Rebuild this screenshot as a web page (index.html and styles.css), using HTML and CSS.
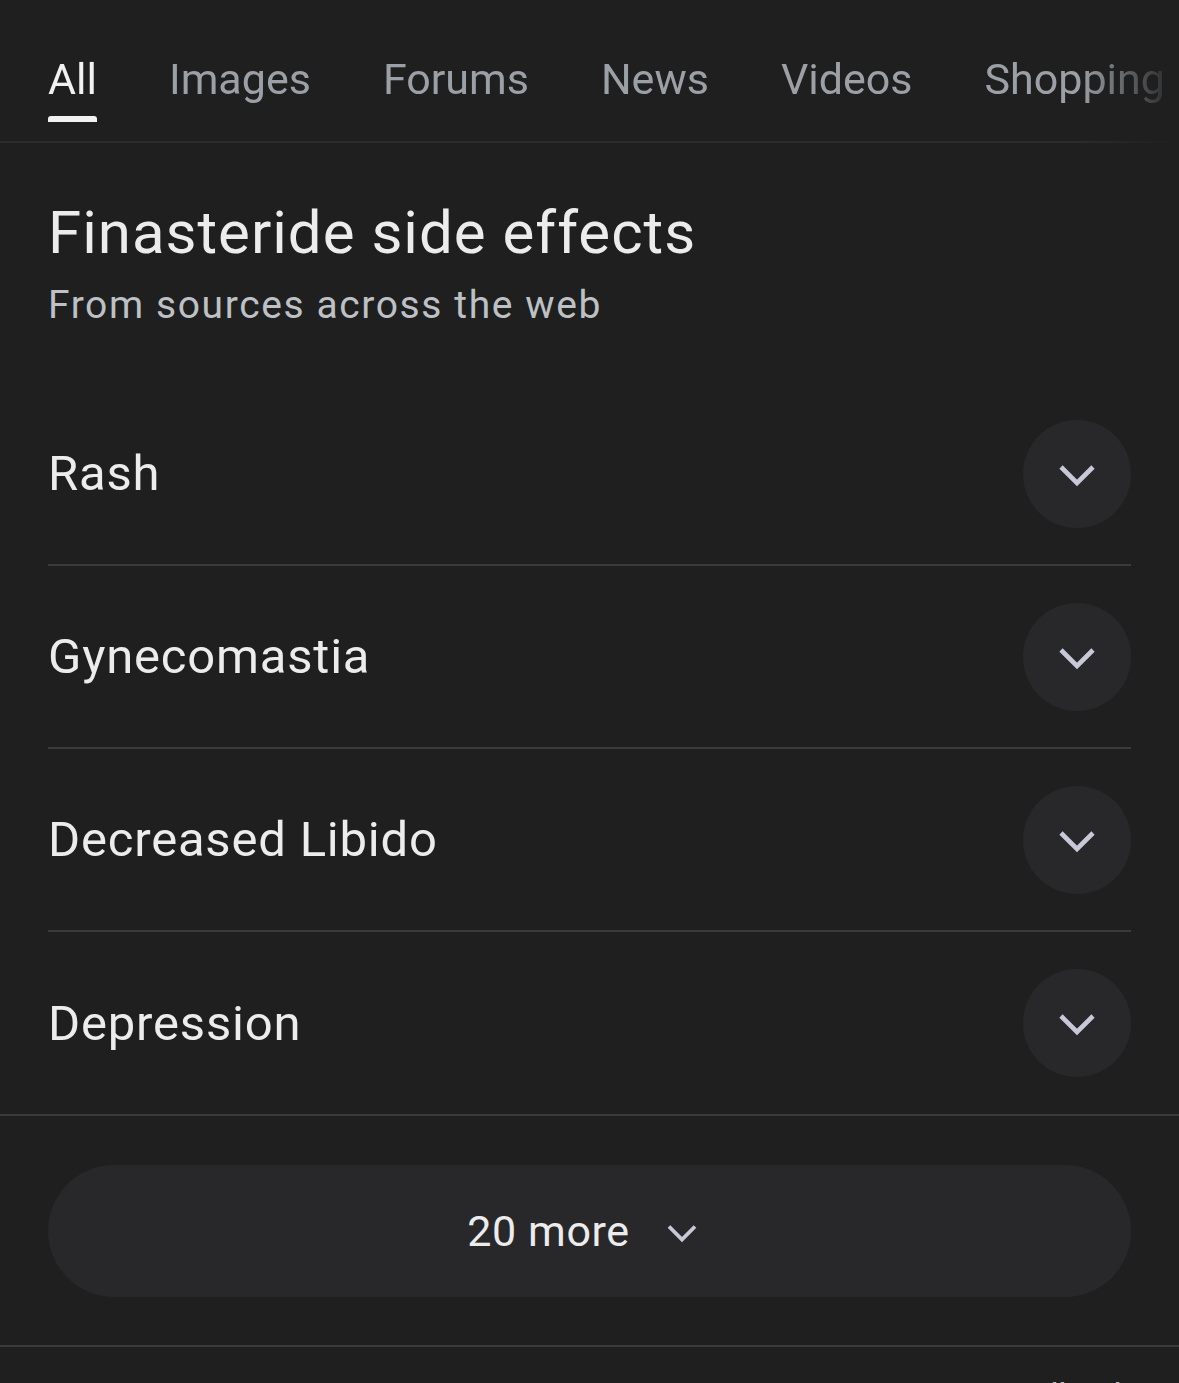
FILE: index.html
```html
<!DOCTYPE html>
<html lang="en">
<head>
<meta charset="utf-8">
<title>Finasteride side effects</title>
<link rel="stylesheet" href="styles.css">
</head>
<body>
<nav class="tabs">
  <div class="tab-track">
    <span class="tab active">All</span>
    <span class="tab">Images</span>
    <span class="tab">Forums</span>
    <span class="tab">News</span>
    <span class="tab">Videos</span>
    <span class="tab">Shopping</span>
  </div>
</nav>

<section class="panel">
  <header class="panel-head">
    <h1 class="title">Finasteride side effects</h1>
    <p class="subtitle">From sources across the web</p>
  </header>

  <ul class="effects">
    <li class="effect">
      <span class="effect-name">Rash</span>
      <span class="expand"><svg viewBox="0 0 40 26" width="40" height="26"><polyline points="4,5 20,21 36,5" fill="none" stroke="currentColor" stroke-width="4.6"/></svg></span>
    </li>
    <li class="effect">
      <span class="effect-name">Gynecomastia</span>
      <span class="expand"><svg viewBox="0 0 40 26" width="40" height="26"><polyline points="4,5 20,21 36,5" fill="none" stroke="currentColor" stroke-width="4.6"/></svg></span>
    </li>
    <li class="effect">
      <span class="effect-name">Decreased Libido</span>
      <span class="expand"><svg viewBox="0 0 40 26" width="40" height="26"><polyline points="4,5 20,21 36,5" fill="none" stroke="currentColor" stroke-width="4.6"/></svg></span>
    </li>
    <li class="effect">
      <span class="effect-name">Depression</span>
      <span class="expand"><svg viewBox="0 0 40 26" width="40" height="26"><polyline points="4,5 20,21 36,5" fill="none" stroke="currentColor" stroke-width="4.6"/></svg></span>
    </li>
  </ul>
</section>

<section class="more-wrap">
  <button class="more" type="button">
    <span class="more-label">20 more</span>
    <svg class="more-icon" viewBox="0 0 32 20" width="32" height="20"><polyline points="3,3.5 16,16.5 29,3.5" fill="none" stroke="currentColor" stroke-width="3.8"/></svg>
  </button>
</section>

<footer class="foot">
  <span class="feedback">Feedback</span>
</footer>
</body>
</html>
```

FILE: styles.css
```css
* {
  box-sizing: border-box;
}

html, body {
  margin: 0;
  padding: 0;
  background: #1f1f1f;
}

body {
  font-family: Roboto, "Liberation Sans", Arial, sans-serif;
  color: #e8e8e8;
  overflow: hidden;
}

.tabs {
  height: 143px;
  border-bottom: 2px solid #2b2c30;
  -webkit-mask-image: linear-gradient(to right, #000 0, #000 1080px, transparent 1179px);
  mask-image: linear-gradient(to right, #000 0, #000 1080px, transparent 1179px);
  overflow: hidden;
}

.tab-track {
  display: flex;
  gap: 72px;
  padding: 54px 0 0 48px;
  white-space: nowrap;
}

.tab {
  position: relative;
  font-size: 43px;
  line-height: 50px;
  color: #9aa0a6;
  height: 68px;
}

.tab.active {
  color: #f1f1f1;
}

.tab.active::after {
  content: "";
  position: absolute;
  left: 0;
  right: 0;
  bottom: 0;
  height: 6px;
  background: #f1f1f1;
  border-radius: 3px 3px 0 0;
}

.panel {
  border-bottom: 2px solid #3a3b3e;
}

.panel-head {
  padding: 57px 48px 0;
}

.title {
  margin: 0;
  font-size: 60px;
  font-weight: 400;
  letter-spacing: 1px;
  line-height: 66px;
  color: #ececec;
}

.subtitle {
  margin: 16px 0 0;
  font-size: 39px;
  letter-spacing: 1.6px;
  line-height: 46px;
  color: #bdc1c6;
}

.effects {
  list-style: none;
  margin: 55px 48px 0;
  padding: 0;
}

.effect {
  display: flex;
  align-items: center;
  justify-content: space-between;
  height: 183px;
  border-bottom: 2px solid #3a3b3e;
}

.effect:last-child {
  border-bottom: none;
  height: 182px;
}

.effect-name {
  font-size: 49px;
  letter-spacing: 0.8px;
  color: #ececec;
}

.expand {
  width: 108px;
  height: 108px;
  border-radius: 50%;
  background: #28282b;
  color: #c7c9d9;
  display: flex;
  align-items: center;
  justify-content: center;
}

.expand svg {
  display: block;
  margin-top: 2px;
}

.more-wrap {
  padding: 49px 48px 48px;
  border-bottom: 2px solid #3a3b3e;
}

.more {
  width: 100%;
  height: 132px;
  border: none;
  border-radius: 66px;
  background: #28282b;
  display: flex;
  align-items: center;
  justify-content: center;
  gap: 36px;
  font-family: inherit;
  cursor: pointer;
  padding: 0 14px 0 0;
}

.more-label {
  font-size: 43px;
  letter-spacing: 0.6px;
  color: #ececec;
}

.more-icon {
  color: #c7c9d9;
  display: block;
  margin-top: 4px;
}

.foot {
  display: flex;
  justify-content: flex-end;
  padding: 28px 48px 0;
}

.feedback {
  font-size: 34px;
  color: #bdc1c6;
}
```
